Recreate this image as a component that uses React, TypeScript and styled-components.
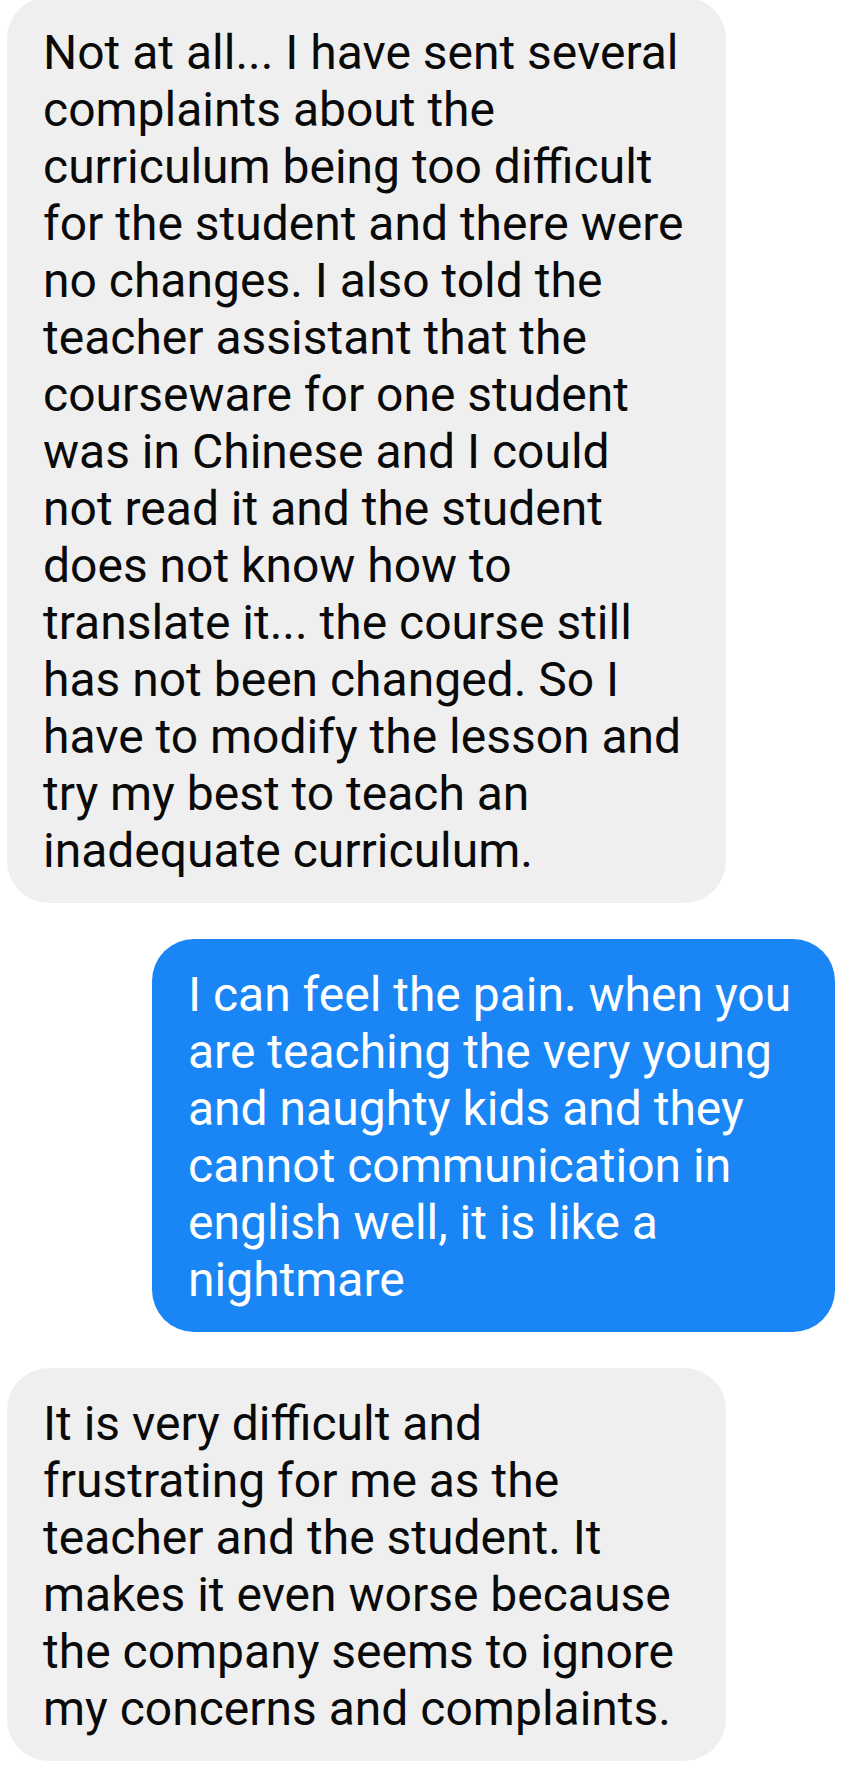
import React from 'react';
import styled, { createGlobalStyle } from 'styled-components';

const GlobalStyle = createGlobalStyle`
  html, body {
    margin: 0;
    padding: 0;
    background: #ffffff;
  }
  body {
    font-family: Roboto, "Noto Sans", "Liberation Sans", sans-serif;
    -webkit-font-smoothing: antialiased;
  }
`

const Thread = styled.div`
  display: flex;
  flex-direction: column;
  gap: 36px;
  width: 844px;
  box-sizing: border-box;
  padding: 0 9px 9px 7px;
  margin-top: -3px;
`

const Row = styled.div<{ $mine?: boolean }>`
  display: flex;
  justify-content: ${(p) => (p.$mine ? 'flex-end' : 'flex-start')};
`

const Bubble = styled.div<{ $mine?: boolean; $width: number }>`
  width: ${(p) => p.$width}px;
  box-sizing: border-box;
  padding: 27px 35px 24px 36px;
  border-radius: 42px;
  background: ${(p) => (p.$mine ? '#1a86f5' : '#efefef')};
  color: ${(p) => (p.$mine ? '#ffffff' : '#0a0a0a')};
`

const Line = styled.span`
  display: block;
  font-size: 48px;
  line-height: 57px;
  white-space: nowrap;
`

type Message = {
  mine: boolean;
  width: number;
  lines: string[];
};

const messages: Message[] = [
  {
    mine: false,
    width: 719,
    lines: [
      'Not at all... I have sent several',
      'complaints about the',
      'curriculum being too difficult',
      'for the student and there were',
      'no changes. I also told the',
      'teacher assistant that the',
      'courseware for one student',
      'was in Chinese and I could',
      'not read it and the student',
      'does not know how to',
      'translate it... the course still',
      'has not been changed. So I',
      'have to modify the lesson and',
      'try my best to teach an',
      'inadequate curriculum.',
    ],
  },
  {
    mine: true,
    width: 683,
    lines: [
      'I can feel the pain. when you',
      'are teaching the very young',
      'and naughty kids and they',
      'cannot communication in',
      'english well, it is like a',
      'nightmare',
    ],
  },
  {
    mine: false,
    width: 719,
    lines: [
      'It is very difficult and',
      'frustrating for me as the',
      'teacher and the student. It',
      'makes it even worse because',
      'the company seems to ignore',
      'my concerns and complaints.',
    ],
  },
];

const App = () => {
  return (
    <>
      <GlobalStyle />
      <Thread>
        {messages.map((msg, i) => (
          <Row key={i} $mine={msg.mine}>
            <Bubble $mine={msg.mine} $width={msg.width}>
              {msg.lines.map((line, j) => (
                <Line key={j}>{line}</Line>
              ))}
            </Bubble>
          </Row>
        ))}
      </Thread>
    </>
  );
};

export default App;
